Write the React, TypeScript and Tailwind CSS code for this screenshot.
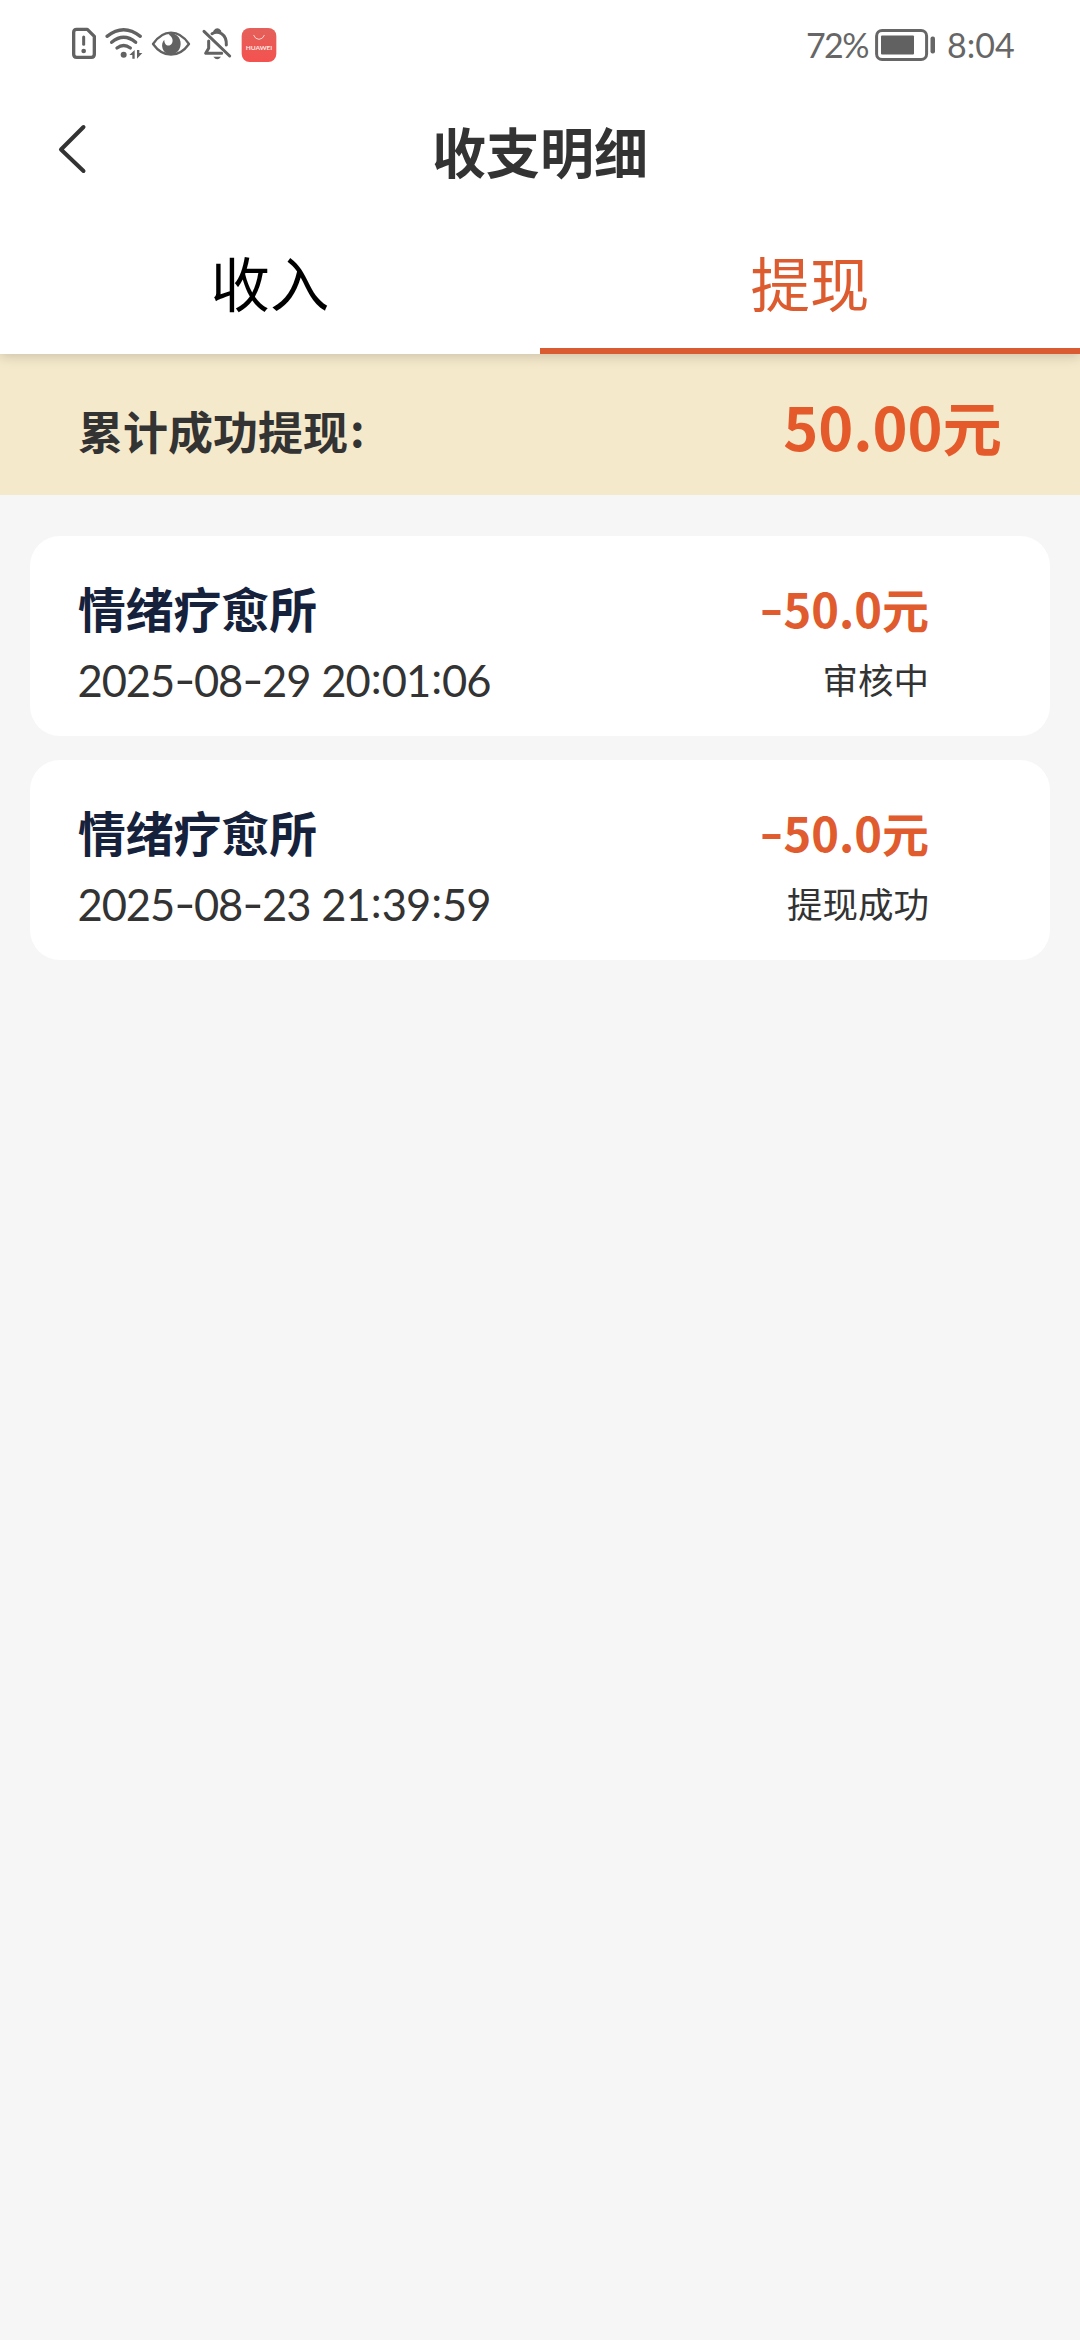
import React from "react";

const latin = "font-['Lato','Noto_Sans_CJK_SC',sans-serif]";

const records = [
  { name: "情绪疗愈所", time: "2025-08-29 20:01:06", amount: "50.0元", status: "审核中" },
  { name: "情绪疗愈所", time: "2025-08-23 21:39:59", amount: "50.0元", status: "提现成功" },
];

const separators: Record<string, string> = {
  "-": "w-[19.700px] -translate-y-px scale-x-[1.35]",
  ":": "w-[12px] -translate-y-[3px]",
  " ": "w-[11px] whitespace-pre",
};

function Timestamp({ value }: { value: string }) {
  return (
    <p className={`${latin} flex text-center text-[43.500px] leading-[71px]`}>
      {[...value].map((c, i) => (
        <span key={i} className={separators[c] ?? "flex w-[24.200px] justify-center"}>{c}</span>
      ))}
    </p>
  );
}

function StatusIcons() {
  return (
    <svg width="250" height="60" viewBox="0 0 750 180" fill="none" stroke="#626262" strokeWidth="10" strokeLinecap="round" strokeLinejoin="round">
      <path d="M80 43H112L133 64V118Q133 127 124 127H80Q71 127 71 118V52Q71 43 80 43Z" />
      <path d="M101 66V88" strokeWidth="9" />
      <circle cx="101" cy="108" r="7" fill="#626262" stroke="none" />
      <path d="M171 64Q221 24 271 64M185 82Q221 52 257 82M201 99Q221 84 241 99" />
      <circle cx="221" cy="119" r="9" fill="#626262" stroke="none" />
      <path d="M238 120L254 105V131H247V120ZM261 105H268V114H277L261 131Z" fill="#626262" stroke="none" />
      <path d="M309 87Q332 53 363 53T417 87Q394 119 363 119T309 87Z" strokeWidth="7" />
      <path d="M363 54C390 58 398 84 388 103C376 124 346 122 338 101C334 90 337 80 343 74C342 87 352 95 361 90C373 82 368 64 356 59Z" fill="#626262" stroke="none" />
      <path d="M462 49L539 123" strokeWidth="9" />
      <path d="M486 56Q500 47 515 56Q530 66 529 90M476 78V100L467 115H515" strokeWidth="9" />
      <path d="M494 49Q502 39 510 49" strokeWidth="8" />
      <path d="M490 125H513Q502 140 490 125Z" fill="#626262" stroke="none" />
      <defs>
        <linearGradient id="brand" x1="0" y1="0" x2="0" y2="1">
          <stop offset="0" stopColor="#e4605a" />
          <stop offset="1" stopColor="#f4524f" />
        </linearGradient>
      </defs>
      <rect x="575" y="39" width="104" height="102" rx="24" fill="url(#brand)" stroke="none" />
      <path d="M611 61Q616 73 627 73T643 61" stroke="#fbd3cf" strokeWidth="3" />
      <text x="627" y="105" textAnchor="middle" textLength="80" lengthAdjust="spacingAndGlyphs" fontFamily="Lato, sans-serif" fontWeight="700" fontSize="18" fill="#ffe9e6" stroke="none">HUAWEI</text>
    </svg>
  );
}

function Battery() {
  return (
    <svg className="ml-[7px] h-[34px] w-[62px]" viewBox="0 0 62 34" fill="none">
      <rect x="1.6" y="2.500" width="50" height="29" rx="5.5" stroke="#666" strokeWidth="3" />
      <rect x="6" y="7.500" width="33" height="19" rx="1" fill="#616161" />
      <rect x="55.500" y="8.500" width="4.5" height="17" rx="2" fill="#666" />
    </svg>
  );
}

export default function App() {
  return (
    <div className="flex h-[2340px] w-[1080px] flex-col bg-[#f6f6f6] font-['Noto_Sans_CJK_SC',sans-serif] text-[#333]">
      <header className="relative z-10 flex h-[354px] flex-col bg-white shadow-[0_2px_12px_rgba(0,0,0,0.18)]">
        <div className="flex h-[90px] items-start justify-between pl-[50px] pr-[65px] pt-[15px]">
          <StatusIcons />
          <div className={`${latin} flex h-[60px] items-center text-[34px] leading-none text-[#666]`}>
            <span className="w-[62px] whitespace-nowrap tracking-[-1.6px]">72%</span>
            <Battery />
            <span className="ml-[10px] w-[68px] whitespace-nowrap">8:04</span>
          </div>
        </div>
        <div className="grid h-[130px] grid-cols-[1fr_auto_1fr] items-start">
          <svg className="ml-[54px] mt-[31px] h-[56px] w-[36px]" viewBox="0 0 36 56" fill="none" stroke="#333" strokeWidth="4" strokeLinecap="round" strokeLinejoin="round">
            <path d="M29.500 6L7 28.500L29.500 50" />
          </svg>
          <h1 className="mt-[21px] text-[54px] font-bold leading-[80px]">收支明细</h1>
        </div>
        <nav className="grid flex-1 grid-cols-2 text-center text-[59.400px] leading-[122px]">
          <button className="flex h-[134px] justify-center text-black">收入</button>
          <button className="flex h-[134px] justify-center border-b-[6px] border-[#da5b31] text-[#dc5c30]">提现</button>
        </nav>
      </header>

      <section className="flex h-[141px] items-center justify-between bg-[#f5e9cb] px-[78px] font-bold">
        <span className="pt-[12px] text-[45px] leading-[60px]">
          累计成功提现<span className="inline-block -translate-y-[3px] translate-x-[2px]">:</span>
        </span>
        <span className="text-[59.400px] leading-[80px] text-[#e45a2b]">50.00元</span>
      </section>

      <main className="flex flex-col gap-[24px] px-[30px] pt-[41px]">
        {records.map((r) => (
          <article key={r.time} className="flex h-[200px] justify-between rounded-[30px] bg-white pl-[48px] pr-[121px] pt-[38px]">
            <div>
              <h2 className="text-[47.800px] font-bold leading-[68px] text-[#16223c]">{r.name}</h2>
              <div className="pt-[3px]">
                <Timestamp value={r.time} />
              </div>
            </div>
            <div className="text-right">
              <p className="text-[47px] font-bold leading-[68px] text-[#e05b2e]">
                <span className="inline-block w-[25px] -translate-y-[2px] scale-x-[1.4] text-center">-</span>
                {r.amount}
              </p>
              <p className="text-[35.500px] leading-[74px]">{r.status}</p>
            </div>
          </article>
        ))}
      </main>
    </div>
  );
}
